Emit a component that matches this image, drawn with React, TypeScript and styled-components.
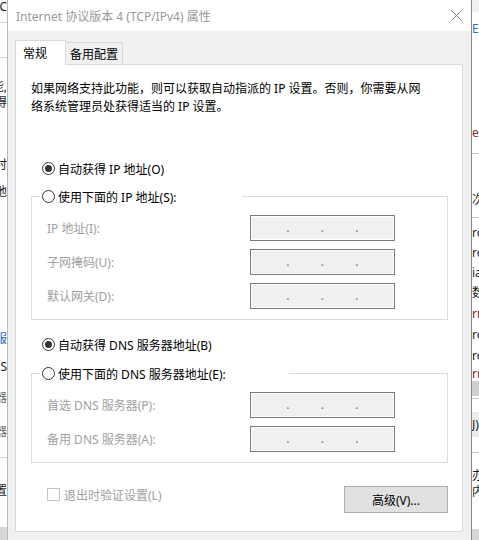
import React from 'react';
import styled, { createGlobalStyle } from 'styled-components';

const GlobalStyle = createGlobalStyle`
  html, body {
    margin: 0;
    padding: 0;
    background: #fff;
  }
  body {
    font-family: "Noto Sans", "Noto Sans CJK SC", sans-serif;
    font-size: 12px;
    color: #000;
  }
`;

type Frag = {
  h: number;
  text?: string;
  color?: string;
  bg?: string;
  line?: boolean;
};

// slivers of the windows lying behind the dialog
const leftFrags: Frag[] = [
  { h: 14, text: 'TC' },
  { h: 8 },
  { h: 1, bg: '#d0d0d0' },
  { h: 34 },
  { h: 1, bg: '#d0d0d0' },
  { h: 21 },
  { h: 16, text: '能,' },
  { h: 16, text: '获得' },
  { h: 45 },
  { h: 17, text: '时' },
  { h: 10 },
  { h: 17, text: '地' },
  { h: 130 },
  { h: 17, text: '; 服', color: '#2a63b8' },
  { h: 11 },
  { h: 17, text: 'NS' },
  { h: 14 },
  { h: 17, text: '器', color: '#666' },
  { h: 17 },
  { h: 17, text: '器', color: '#666' },
  { h: 17 },
  { h: 1, bg: '#d0d0d0' },
  { h: 24 },
  { h: 17, text: '置' },
  { h: 28 },
  { h: 20, bg: '#d6d6d6' },
];

const rightFrags: Frag[] = [
  { h: 12, bg: '#f0f0f0' },
  { h: 8 },
  { h: 17, text: 'E', color: '#3b6db3' },
  { h: 87 },
  { h: 18, text: 'el', color: '#8b2e2e' },
  { h: 11, line: true },
  { h: 37 },
  { h: 18, text: '次' },
  { h: 8, line: true },
  { h: 5 },
  { h: 20, text: 'ro' },
  { h: 20, text: 'ro' },
  { h: 20, text: 'ia' },
  { h: 20, text: '数' },
  { h: 21, text: 'rn', color: '#6b1f1f' },
  { h: 21, text: 'ro' },
  { h: 21, text: 'ro' },
  { h: 15, text: 'rn', color: '#6b1f1f' },
  { h: 15, bg: '#cfcfcf' },
  { h: 2, line: true },
  { h: 13 },
  { h: 25, text: 'J).', bg: '#ececec' },
  { h: 15, line: true },
  { h: 15 },
  { h: 16, text: '办' },
  { h: 16, text: '内' },
  { h: 29 },
  { h: 20, bg: '#d6d6d6' },
];

const Desktop = styled.div`
  display: flex;
  width: 479px;
  height: 540px;
  overflow: hidden;
  background: #fff;
`;

const Strip = styled.div<{ $side: 'left' | 'right' }>`
  width: 7px;
  flex: none;
  display: flex;
  flex-direction: column;
  overflow: hidden;
  align-items: ${p => (p.$side === 'left' ? 'flex-end' : 'flex-start')};
`;

const StripRow = styled.div<{ $h: number; $color?: string; $bg?: string; $line?: boolean }>`
  flex: none;
  width: 40px;
  height: ${p => p.$h}px;
  line-height: ${p => p.$h}px;
  color: ${p => p.$color || '#1a1a1a'};
  background: ${p => p.$bg || 'transparent'};
  border-bottom: ${p => (p.$line ? '1px solid #c8c8c8' : 'none')};
  white-space: nowrap;
  overflow: hidden;
  font-size: 12px;
`;

const LeftText = styled.span`
  display: block;
  text-align: right;
`;

const Dialog = styled.div`
  width: 465px;
  flex: none;
  box-sizing: border-box;
  border-left: 1px solid #b8b8b8;
  border-right: 1px solid #8a8a8a;
  display: flex;
  flex-direction: column;
  background: #f0f0f0;
`;

const TitleBar = styled.div`
  height: 31px;
  flex: none;
  background: #fff;
  display: flex;
  align-items: center;
  padding: 0 9px 0 8px;
`;

const Title = styled.div`
  flex: 1;
  color: #999;
  font-size: 12px;
`;

const CloseGlyph = () => (
  <svg width="11" height="11" viewBox="0 0 11 11">
    <path d="M0.5 0.5 L10.5 10.5 M10.5 0.5 L0.5 10.5" stroke="#7a7a7a" strokeWidth="1" fill="none" />
  </svg>
);

const Body = styled.div`
  flex: 1;
  padding: 9px 8px 0 7px;
  display: flex;
  flex-direction: column;
`;

const TabStrip = styled.div`
  display: flex;
  align-items: flex-end;
  height: 24px;
`;

const Tab = styled.div<{ $active?: boolean; $width: number }>`
  box-sizing: border-box;
  width: ${p => p.$width}px;
  height: ${p => (p.$active ? 25 : 22)}px;
  margin-bottom: ${p => (p.$active ? -1 : 0)}px;
  padding-left: ${p => (p.$active ? 7 : 4)}px;
  display: flex;
  align-items: center;
  background: ${p => (p.$active ? '#fff' : '#f0f0f0')};
  border: 1px solid #d9d9d9;
  border-bottom: none;
  border-left: ${p => (p.$active ? '1px solid #d9d9d9' : 'none')};
  position: relative;
  z-index: ${p => (p.$active ? 1 : 0)};
`;

const Panel = styled.div`
  box-sizing: border-box;
  width: 448px;
  height: 468px;
  flex: none;
  background: #fff;
  border: 1px solid #d9d9d9;
  padding: 0 14px 0 15px;
  display: flex;
  flex-direction: column;
`;

const Intro = styled.p`
  margin: 15px 0 0;
  line-height: 18px;
  white-space: nowrap;
`;

const Option = styled.label<{ $indent?: number; $gap?: number }>`
  display: flex;
  align-items: center;
  gap: 3px;
  height: 17px;
  margin-top: ${p => p.$gap || 0}px;
  padding-left: ${p => p.$indent || 0}px;
`;

const RadioMark = styled.span<{ $checked?: boolean }>`
  box-sizing: border-box;
  flex: none;
  width: 13px;
  height: 13px;
  border: 1px solid #333;
  border-radius: 50%;
  background: #fff;
  display: flex;
  align-items: center;
  justify-content: center;

  &::after {
    content: '';
    width: 7px;
    height: 7px;
    border-radius: 50%;
    background: #333;
    display: ${p => (p.$checked ? 'block' : 'none')};
  }
`;

const Group = styled.fieldset<{ $gap: number }>`
  margin: ${p => p.$gap}px 0 0;
  padding: 10px 52px 10px 15px;
  border: 1px solid #dcdcdc;
  min-width: 0;
  display: grid;
  grid-template-columns: 1fr 145px;
  grid-auto-rows: 26px;
  row-gap: 8px;
  align-items: center;
`;

// the legend starts 8px in from the frame, ahead of the 15px content inset
const GroupLegend = styled.legend<{ $width: number }>`
  padding: 0;
  margin-left: -7px;
  width: ${p => p.$width}px;
`;

const FieldLabel = styled.span`
  color: #a0a0a0;
`;

const IpBox = styled.div`
  box-sizing: border-box;
  height: 26px;
  border: 1px solid #7a7a7a;
  box-shadow: inset 0 0 0 1px #fff;
  background: #f0f0f0;
  display: grid;
  grid-template-columns: repeat(3, 34.5px) 1fr;
  padding-left: 4px;
  color: #6d6d6d;
  line-height: 24px;
`;

const Dot = styled.span`
  text-align: right;
`;

const Footer = styled.div`
  margin-top: 23px;
  display: flex;
  align-items: flex-start;
  justify-content: space-between;
`;

const CheckOption = styled.label`
  display: flex;
  align-items: center;
  gap: 4px;
  height: 17px;
  padding-left: 16px;
  color: #a0a0a0;
`;

const CheckMark = styled.span`
  box-sizing: border-box;
  width: 13px;
  height: 13px;
  border: 1px solid #c4c4c4;
  background: #fff;
`;

const Button = styled.button`
  box-sizing: border-box;
  width: 104px;
  height: 27px;
  padding: 0;
  border: 1px solid #adadad;
  background: #e1e1e1;
  color: #000;
  font: inherit;
`;

const IpField = () => (
  <IpBox>
    <Dot>.</Dot>
    <Dot>.</Dot>
    <Dot>.</Dot>
  </IpBox>
);

const StripView = ({ side, frags }: { side: 'left' | 'right'; frags: Frag[] }) => (
  <Strip $side={side}>
    {frags.map((f, i) => (
      <StripRow key={i} $h={f.h} $color={f.color} $bg={f.bg} $line={f.line}>
        {side === 'left' ? <LeftText>{f.text}</LeftText> : f.text}
      </StripRow>
    ))}
  </Strip>
);

const App = () => (
  <Desktop>
    <GlobalStyle />
    <StripView side="left" frags={leftFrags} />
    <Dialog>
      <TitleBar>
        <Title>Internet 协议版本 4 (TCP/IPv4) 属性</Title>
        <CloseGlyph />
      </TitleBar>
      <Body>
        <TabStrip>
          <Tab $active $width={51}>常规</Tab>
          <Tab $width={57}>备用配置</Tab>
        </TabStrip>
        <Panel>
          <Intro>
            如果网络支持此功能，则可以获取自动指派的 IP 设置。否则，你需要从网
            <br />
            络系统管理员处获得适当的 IP 设置。
          </Intro>

          <Option $indent={11} $gap={44}>
            <RadioMark $checked />
            自动获得 IP 地址(O)
          </Option>
          <Group $gap={11}>
            <GroupLegend $width={202}>
              <Option $indent={2}>
                <RadioMark />
                使用下面的 IP 地址(S):
              </Option>
            </GroupLegend>
            <FieldLabel>IP 地址(I):</FieldLabel>
            <IpField />
            <FieldLabel>子网掩码(U):</FieldLabel>
            <IpField />
            <FieldLabel>默认网关(D):</FieldLabel>
            <IpField />
          </Group>

          <Option $indent={11} $gap={16}>
            <RadioMark $checked />
            自动获得 DNS 服务器地址(B)
          </Option>
          <Group $gap={12}>
            <GroupLegend $width={249}>
              <Option $indent={2}>
                <RadioMark />
                使用下面的 DNS 服务器地址(E):
              </Option>
            </GroupLegend>
            <FieldLabel>首选 DNS 服务器(P):</FieldLabel>
            <IpField />
            <FieldLabel>备用 DNS 服务器(A):</FieldLabel>
            <IpField />
          </Group>

          <Footer>
            <CheckOption>
              <CheckMark />
              退出时验证设置(L)
            </CheckOption>
            <Button>高级(V)...</Button>
          </Footer>
        </Panel>
      </Body>
    </Dialog>
    <StripView side="right" frags={rightFrags} />
  </Desktop>
);

export default App;
